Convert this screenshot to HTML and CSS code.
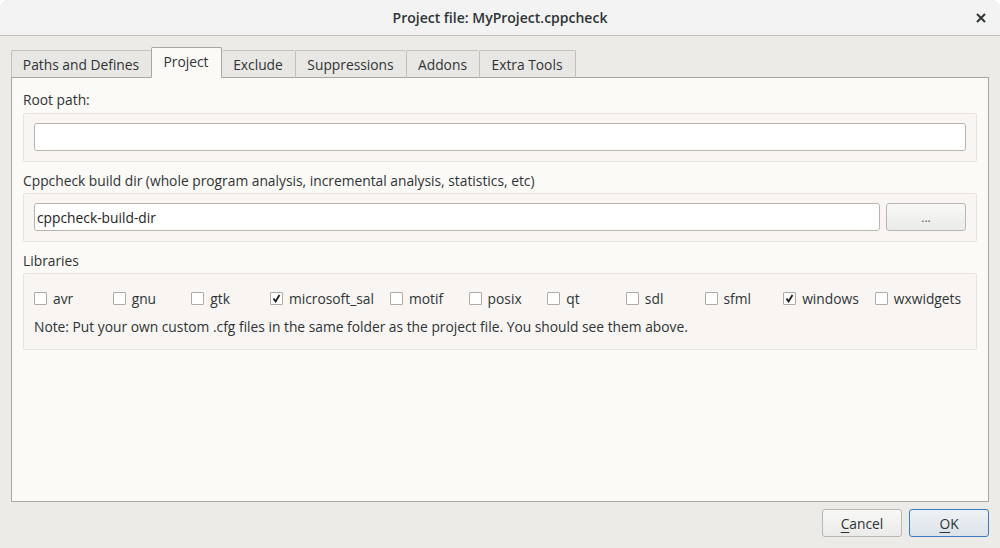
FILE: index.html
```html
<!DOCTYPE html>
<html>
<head>
<meta charset="utf-8">
<title>Project file: MyProject.cppcheck</title>
<link rel="stylesheet" href="styles.css">
</head>
<body>
<div class="window">
  <div class="titlebar">
    <span class="title">Project file: MyProject.cppcheck</span>
    <span class="close" aria-label="Close">
      <svg width="10" height="10" viewBox="0 0 10 10"><path d="M1 1 L9 9 M9 1 L1 9" stroke="#2e3436" stroke-width="2" stroke-linecap="butt"/></svg>
    </span>
  </div>
  <div class="body">
    <div class="tabs">
      <div class="tab t-paths">Paths and Defines</div>
      <div class="tab active t-project">Project</div>
      <div class="tab t-exclude">Exclude</div>
      <div class="tab t-supp">Suppressions</div>
      <div class="tab t-addons">Addons</div>
      <div class="tab last t-extra">Extra Tools</div>
    </div>
    <div class="pane">
      <div class="label first">Root path:</div>
      <div class="group">
        <div class="input"></div>
      </div>
      <div class="label">Cppcheck build dir (whole program analysis, incremental analysis, statistics, etc)</div>
      <div class="group row">
        <div class="input grow">cppcheck-build-dir</div>
        <div class="button browse">...</div>
      </div>
      <div class="label">Libraries</div>
      <div class="group libs">
        <div class="checks">
          <div class="check"><span class="box"></span>avr</div>
          <div class="check"><span class="box"></span>gnu</div>
          <div class="check"><span class="box"></span>gtk</div>
          <div class="check"><span class="box on"><svg width="9" height="9" viewBox="0 0 9 9"><path d="M1.5 4.5 L3.6 7.5 L7.5 1" fill="none" stroke="#1e1e1e" stroke-width="1.8"/></svg></span>microsoft_sal</div>
          <div class="check"><span class="box"></span>motif</div>
          <div class="check"><span class="box"></span>posix</div>
          <div class="check"><span class="box"></span>qt</div>
          <div class="check"><span class="box"></span>sdl</div>
          <div class="check"><span class="box"></span>sfml</div>
          <div class="check"><span class="box on"><svg width="9" height="9" viewBox="0 0 9 9"><path d="M1.5 4.5 L3.6 7.5 L7.5 1" fill="none" stroke="#1e1e1e" stroke-width="1.8"/></svg></span>windows</div>
          <div class="check"><span class="box"></span>wxwidgets</div>
        </div>
        <div class="note">Note: Put your own custom .cfg files in the same folder as the project file. You should see them above.</div>
      </div>
    </div>
    <div class="footer">
      <div class="button dlg"><span class="mn">C</span>ancel</div>
      <div class="button dlg default"><span class="mn">O</span>K</div>
    </div>
  </div>
</div>
</body>
</html>
```

FILE: styles.css
```css
html, body {
  margin: 0;
  padding: 0;
  background: #ffffff;
}
body {
  font-family: "Open Sans", "Noto Sans", "DejaVu Sans", sans-serif;
  font-size: 13.8px;
  color: #2e3436;
}
.window {
  width: 1000px;
  height: 548px;
  border-radius: 8px 8px 0 0;
  overflow: hidden;
  display: flex;
  flex-direction: column;
  background: #edebe8;
}
.titlebar {
  height: 35px;
  flex: none;
  background: #f3f3f3;
  border-bottom: 1px solid #c2c0bd;
  display: flex;
  align-items: center;
  justify-content: center;
  position: relative;
}
.title {
  font-weight: 600;
  font-size: 14px;
  color: #2e3436;
}
.close {
  position: absolute;
  right: 14px;
  top: 13px;
  width: 10px;
  height: 10px;
  display: flex;
}
.body {
  flex: 1;
  display: flex;
  flex-direction: column;
  padding: 12px 11px 11px 11px;
}
.tabs {
  display: flex;
  align-items: flex-end;
  height: 30px;
  flex: none;
  position: relative;
  z-index: 1;
  margin-bottom: -1px;
}
.tab {
  height: 28px;
  box-sizing: border-box;
  padding: 0 1px 0 0;
  display: flex;
  align-items: center;
  justify-content: center;
  white-space: nowrap;
  background: #e9e7e3;
  border: 1px solid #c3c0bb;
  border-right: none;
  border-bottom: 1px solid #a9a6a2;
  border-radius: 2px 2px 0 0;
  color: #2e3436;
}
.tab.last {
  border-right: 1px solid #c3c0bb;
}
.tab.active {
  height: 31px;
  background: #fcfaf7;
  border: 1px solid #a9a6a2;
  border-bottom: 1px solid #fcfaf7;
  padding: 0 1px 2px 0;
}
.tab.active + .tab {
  border-left: none;
}
.t-paths { width: 140px; }
.t-project { width: 71px; }
.t-exclude { width: 73px; }
.t-supp { width: 111px; }
.t-addons { width: 73px; }
.t-extra { width: 97px; }
.pane {
  flex: 1;
  background: #fcfaf7;
  border: 1px solid #a9a6a2;
  padding: 0 11px;
  display: flex;
  flex-direction: column;
}
.label {
  height: 20px;
  line-height: 20px;
  margin: 9px 0 2px 0;
  color: #2e3436;
}
.label.first {
  margin-top: 12px;
  margin-bottom: 3px;
}
.group {
  border: 1px solid #e8e4df;
  background: #f8f5f2;
  border-radius: 2px;
  padding: 9px 10px 10px 10px;
}
.group.row {
  display: flex;
  gap: 6px;
}
.input {
  height: 28px;
  box-sizing: border-box;
  background: #ffffff;
  border: 1px solid #b7b4b0;
  border-radius: 3px;
  padding: 0 2px;
  display: flex;
  align-items: center;
  color: #1e1e1e;
}
.grow {
  flex: 1;
}
.button {
  height: 28px;
  box-sizing: border-box;
  border: 1px solid #bab7b3;
  border-radius: 3px;
  background: linear-gradient(#f8f8f7, #ebebea);
  display: flex;
  align-items: center;
  justify-content: center;
  color: #2e3436;
}
.browse {
  width: 80px;
  padding-top: 1px;
  font-size: 12px;
  color: #555753;
}
.libs {
  padding: 14px 10px 12px 10px;
}
.checks {
  display: flex;
  height: 20px;
  align-items: center;
}
.check {
  flex: 1 1 0;
  min-width: max-content;
  display: flex;
  align-items: center;
  white-space: nowrap;
  padding-right: 16px;
  color: #2e3436;
}
.check:last-child {
  padding-right: 5px;
}
.box {
  width: 13px;
  height: 13px;
  box-sizing: border-box;
  border: 1px solid #aeaba7;
  background: #ffffff;
  border-radius: 1px;
  margin-right: 6px;
  display: flex;
  align-items: center;
  justify-content: center;
  flex: none;
}
.note {
  margin-top: 9px;
  height: 20px;
  line-height: 20px;
  color: #2e3436;
}
.footer {
  flex: none;
  display: flex;
  justify-content: flex-end;
  gap: 7px;
  padding-top: 7px;
}
.dlg {
  width: 80px;
}
.default {
  border-color: #3b7cc0;
  background: linear-gradient(#eef2f5, #dce3e9);
}
.mn {
  text-decoration: underline;
  text-underline-offset: 3px;
}
```
